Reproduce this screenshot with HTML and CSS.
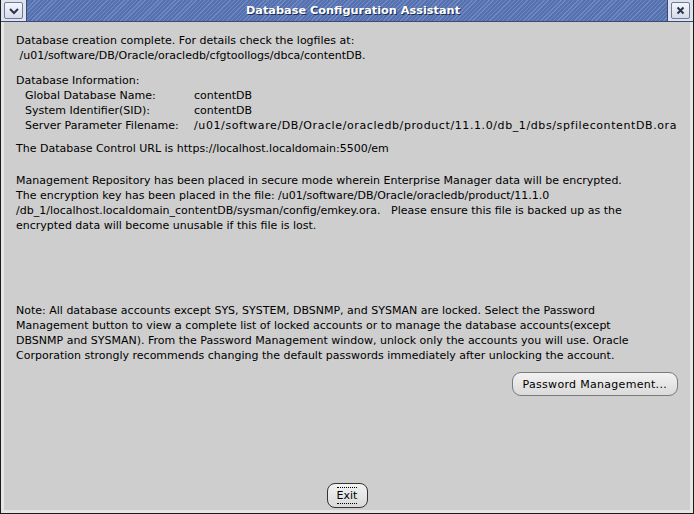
FILE: index.html
```html
<!DOCTYPE html>
<html lang="en">
<head>
  <meta charset="UTF-8" />
  <title>Database Configuration Assistant</title>
  <link rel="stylesheet" href="styles.css">
</head>
<body>
  <div class="window">
    <!-- Title bar -->
    <div class="titlebar">
      <button class="wm-btn menu-btn">
        <svg width="10" height="8" viewBox="0 0 10 8"><path d="M1 2 L5 6 L9 2" fill="none" stroke="#2a3550" stroke-width="2"/></svg>
      </button>
      <div class="title">Database Configuration Assistant</div>
      <button class="wm-btn close-btn">
        <svg width="9" height="9" viewBox="0 0 9 9"><path d="M1.5 1.5 L7.5 7.5 M7.5 1.5 L1.5 7.5" stroke="#2a3550" stroke-width="2"/></svg>
      </button>
    </div>

    <div class="client">
      <div class="content">
        <p class="block first">
          Database creation complete. For details check the logfiles at:<br>
          &nbsp;/u01/software/DB/Oracle/oracledb/cfgtoollogs/dbca/contentDB.
        </p>

        <div class="block info">
          <div>Database Information:</div>
          <div class="info-row"><span class="label">Global Database Name:</span><span>contentDB</span></div>
          <div class="info-row"><span class="label">System Identifier(SID):</span><span>contentDB</span></div>
          <div class="info-row"><span class="label">Server Parameter Filename:</span><span class="path">/u01/software/DB/Oracle/oracledb/product/11.1.0/db_1/dbs/spfilecontentDB.ora</span></div>
        </div>

        <p class="block url">The Database Control URL is https://localhost.localdomain:5500/em</p>

        <p class="block repo">
          Management Repository has been placed in secure mode wherein Enterprise Manager data will be encrypted.<br>
          The encryption key has been placed in the file: /u01/software/DB/Oracle/oracledb/product/11.1.0<br>
          /db_1/localhost.localdomain_contentDB/sysman/config/emkey.ora.&nbsp;&nbsp;&nbsp;Please ensure this file is backed up as the<br>
          encrypted data will become unusable if this file is lost.
        </p>

        <p class="block note">
          Note: All database accounts except SYS, SYSTEM, DBSNMP, and SYSMAN are locked. Select the Password<br>
          Management button to view a complete list of locked accounts or to manage the database accounts(except<br>
          DBSNMP and SYSMAN). From the Password Management window, unlock only the accounts you will use. Oracle<br>
          Corporation strongly recommends changing the default passwords immediately after unlocking the account.
        </p>

        <div class="actions">
          <button class="btn pw-btn">Password Management...</button>
        </div>
      </div>

      <div class="footer">
        <button class="btn exit-btn"><span class="focus">Exit</span></button>
      </div>
    </div>
  </div>
</body>
</html>
```

FILE: styles.css
```css
body {
  margin: 0;
  background: #cecece;
  font-family: 'DejaVu Sans', sans-serif;
}

.window {
  width: 694px;
  height: 514px;
  box-sizing: border-box;
  display: flex;
  flex-direction: column;
  background: #e6e6e6;
  border: 1px solid #1c1c1c;
  border-top: none;
}

/* Title bar */
.titlebar {
  height: 22px;
  display: flex;
  align-items: center;
  background: #dfe3ee;
  border-bottom: 1px solid #3a4a70;
  box-sizing: border-box;
}

.wm-btn {
  width: 19px;
  height: 17px;
  margin: 0 3px;
  padding: 0;
  display: flex;
  align-items: center;
  justify-content: center;
  background: linear-gradient(#f4f6fb, #d7dcea);
  border: 1px solid #6d7a99;
  border-radius: 2px;
}

.title {
  flex: 1;
  align-self: stretch;
  display: flex;
  align-items: center;
  justify-content: center;
  padding-left: 12px;
  color: #fff;
  font-weight: bold;
  font-size: 11.3px;
  text-shadow: 1px 1px 0 #1e2c52;
  background: repeating-linear-gradient(-45deg, #5571b0 0, #5571b0 2px, #7088c0 2px, #7088c0 3px);
  border-left: 1px solid #3a4a70;
  border-right: 1px solid #3a4a70;
}

.client {
  flex: 1;
  display: flex;
  flex-direction: column;
  margin: 0 3px 3px 3px;
  background: #cecece;
}

.content {
  flex: 1;
  padding: 11px 12px 0 12px;
  font-size: 11px;
  line-height: 15px;
  color: #000;
}

.block {
  margin: 0;
}

.info { margin-top: 10px; }
.url { margin-top: 8px; }
.repo { margin-top: 17px; }
.note { margin-top: 70px; }

.info-row {
  display: flex;
  padding-left: 9px;
}

.info-row .label {
  width: 169px;
}

.path {
  letter-spacing: 0.6px;
}

.actions {
  display: flex;
  justify-content: flex-end;
  margin-top: 9px;
}

.btn {
  font-family: 'DejaVu Sans', sans-serif;
  font-size: 11px;
  color: #000;
  background: linear-gradient(#f2f2f2, #dadada);
  border: 1px solid #7a7a7a;
  border-radius: 9px;
  cursor: pointer;
}

.pw-btn {
  height: 24px;
  padding: 0 10px;
  letter-spacing: 0.3px;
}

.footer {
  display: flex;
  justify-content: center;
  padding-bottom: 2px;
}

.exit-btn {
  height: 25px;
  width: 41px;
  padding: 0;
  border: 1px solid #333;
  border-radius: 8px;
}

.exit-btn .focus {
  border-top: 1px dotted #000;
  border-bottom: 1px dotted #000;
  padding: 1px 0;
}
```
